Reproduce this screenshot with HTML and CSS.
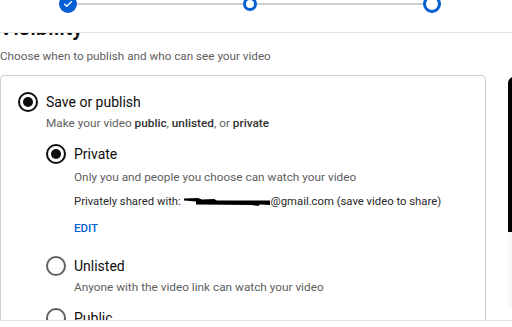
FILE: index.html
```html
<!DOCTYPE html>
<html lang="en">
<head>
    <meta charset="UTF-8">
    <meta name="viewport" content="width=device-width, initial-scale=1.0">
    <title>Visibility</title>
    <link rel="stylesheet" href="styles.css">
</head>
<body>
<div class="dialog">
    <header class="stepper-bar">
        <div class="stepper">
            <span class="step done">
                <svg width="10" height="10" viewBox="0 0 24 24"><path d="M4 12.5l5 5L20 6.5" fill="none" stroke="#fff" stroke-width="3.2" stroke-linecap="round" stroke-linejoin="round"/></svg>
            </span>
            <span class="step-line"></span>
            <span class="step small"></span>
            <span class="step-line"></span>
            <span class="step current"></span>
        </div>
    </header>

    <main class="content">
        <div class="left">
            <h2 class="page-title">Visibility</h2>
            <p class="subtitle">Choose when to publish and who can see your video</p>

            <div class="card">
                <div class="option">
                    <span class="radio checked"></span>
                    <div class="option-body">
                        <div class="label">Save or publish</div>
                        <div class="desc">Make your video <b>public</b>, <b>unlisted</b>, or <b>private</b></div>

                        <div class="sub-options">
                            <div class="option share">
                                <span class="radio checked"></span>
                                <div class="option-body">
                                    <div class="label">Private</div>
                                    <div class="desc">Only you and people you choose can watch your video</div>
                                    <div class="shared">Privately shared with: <svg class="redacted" width="87" height="12" viewBox="0 0 87 12"><path d="M0 3.5 L14 3 L18 4.5 L30 4 L33 5.5 L86 5.5 L86 10 L76 9.5 L74 11 L68 10 L12 9.5 L12 6.5 L0 5.5 Z" fill="#000"/></svg>@gmail.com (save video to share)</div>
                                    <a class="edit" href="#">EDIT</a>
                                </div>
                            </div>
                            <div class="option">
                                <span class="radio"></span>
                                <div class="option-body">
                                    <div class="label">Unlisted</div>
                                    <div class="desc">Anyone with the video link can watch your video</div>
                                </div>
                            </div>
                            <div class="option">
                                <span class="radio"></span>
                                <div class="option-body">
                                    <div class="label">Public</div>
                                    <div class="desc">Everyone can watch your video</div>
                                </div>
                            </div>
                        </div>
                    </div>
                </div>
            </div>
        </div>

        <aside class="right">
            <div class="preview"></div>
            <div class="preview-info"></div>
        </aside>
    </main>

    <footer class="footer"></footer>
</div>
</body>
</html>
```

FILE: styles.css
```css
body {
    margin: 0;
    font-family: Roboto, "Noto Sans", sans-serif;
    background: #fff;
    color: #0d0d0d;
}

.dialog {
    width: 512px;
    height: 327px;
    display: flex;
    flex-direction: column;
    overflow: hidden;
}

/* stepper */
.stepper-bar {
    height: 32px;
    flex: none;
    border-bottom: 1px solid #e3e3e3;
    overflow: hidden;
}

.stepper {
    display: flex;
    align-items: center;
    margin-top: -5px;
    padding-left: 59px;
}

.step {
    box-sizing: border-box;
    border-radius: 50%;
    flex: none;
    display: flex;
    align-items: center;
    justify-content: center;
}

.step.done {
    width: 18px;
    height: 18px;
    background: #065fd4;
}

.step.small {
    width: 14px;
    height: 14px;
    border: 3px solid #065fd4;
}

.step.current {
    width: 18px;
    height: 18px;
    border: 3px solid #065fd4;
}

.step-line {
    width: 166px;
    height: 2px;
    background: #cfcfcf;
}

/* main area */
.content {
    flex: 1;
    display: flex;
    gap: 22px;
    overflow: hidden;
}

.left {
    width: 486px;
    flex: none;
}

.page-title {
    margin: -19px 0 0 -1px;
    font-size: 22px;
    line-height: 28px;
    font-weight: 500;
}

.subtitle {
    margin: 5px 0 0;
    font-size: 11.7px;
    line-height: 18px;
    color: #606060;
}

.card {
    margin-top: 10px;
    border: 1px solid #cfcfcf;
    border-radius: 4px;
    padding: 16px 0 0 17px;
    height: 400px;
}

.option {
    display: flex;
    gap: 8px;
}

.option-body {
    flex: 1;
}

.radio {
    box-sizing: border-box;
    width: 20px;
    height: 20px;
    flex: none;
    border: 2px solid #606060;
    border-radius: 50%;
    display: flex;
    align-items: center;
    justify-content: center;
}

.radio.checked {
    border-color: #0d0d0d;
}

.radio.checked::after {
    content: "";
    width: 10px;
    height: 10px;
    border-radius: 50%;
    background: #0d0d0d;
}

.label {
    font-size: 14px;
    line-height: 20px;
}

.desc {
    margin-top: 2px;
    font-size: 11.8px;
    line-height: 18px;
    color: #606060;
}

.desc b {
    font-weight: 500;
    color: #303030;
}

.sub-options {
    margin-top: 12px;
}

.sub-options .option {
    margin-bottom: 12px;
}

.sub-options .option.share {
    margin-bottom: 19px;
}

.share .desc {
    margin-top: 4px;
}

.shared {
    margin-top: 7px;
    font-size: 11.3px;
    line-height: 18px;
    color: #282828;
}

.redacted {
    vertical-align: -2px;
}

.edit {
    display: block;
    margin-top: 8px;
    font-size: 11.5px;
    line-height: 18px;
    font-weight: 500;
    color: #065fd4;
    text-decoration: none;
}

/* right column */
.right {
    flex: none;
    width: 280px;
    padding-top: 44px;
}

.preview {
    height: 155px;
    background: #000;
    border-radius: 6px 6px 0 0;
}

.preview-info {
    height: 78px;
    background: #f9f9f9;
    border-radius: 0 0 6px 6px;
}

.footer {
    height: 6px;
    flex: none;
    border-top: 1px solid #e3e3e3;
    background: #fff;
}
```
